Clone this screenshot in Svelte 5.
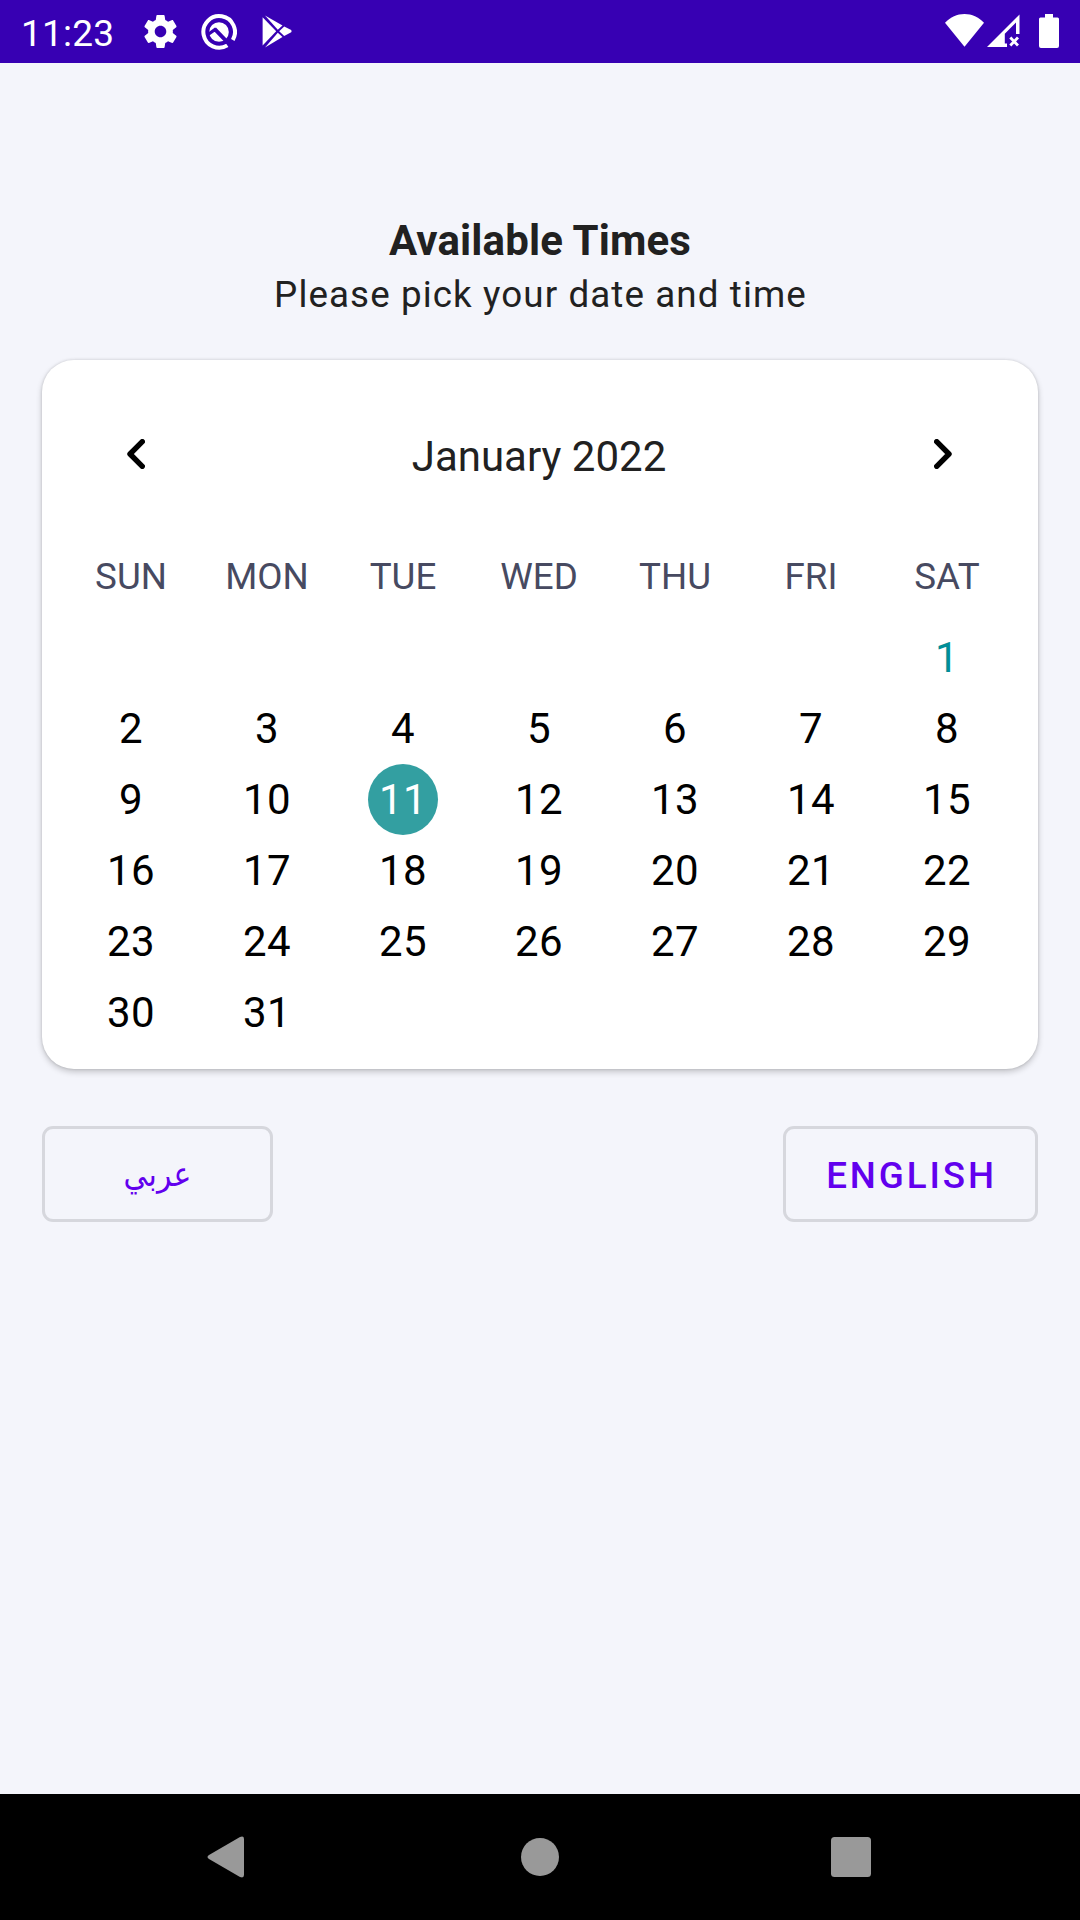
<script>
  const weekdays = ['SUN', 'MON', 'TUE', 'WED', 'THU', 'FRI', 'SAT'];
  const today = 1;
  const leadingBlanks = 6;
  const cells = [
    ...Array(leadingBlanks).fill(null),
    ...Array.from({ length: 31 }, (_, i) => i + 1)
  ];
  let selected = $state(11);
</script>

<div class="screen">
  <header class="status">
    <span class="clock">11:23</span>
    <svg class="gear" viewBox="2 2 20 20" fill="#fff">
      <path d="M19.43 12.98c.04-.32.07-.64.07-.98s-.03-.66-.07-.98l2.11-1.65c.19-.15.24-.42.12-.64l-2-3.46c-.12-.22-.39-.3-.61-.22l-2.49 1c-.52-.4-1.08-.73-1.69-.98l-.38-2.65C14.46 2.18 14.25 2 14 2h-4c-.25 0-.46.18-.49.42l-.38 2.65c-.61.25-1.17.59-1.69.98l-2.49-1c-.23-.09-.49 0-.61.22l-2 3.46c-.13.22-.07.49.12.64l2.11 1.65c-.04.32-.07.65-.07.98s.03.66.07.98l-2.11 1.65c-.19.15-.24.42-.12.64l2 3.46c.12.22.39.3.61.22l2.49-1c.52.4 1.08.73 1.69.98l.38 2.65c.03.24.24.42.49.42h4c.25 0 .46-.18.49-.42l.38-2.65c.61-.25 1.17-.59 1.69-.98l2.49 1c.23.09.49 0 .61-.22l2-3.46c.12-.22.07-.49-.12-.64l-2.11-1.65zM12 15.5c-1.93 0-3.5-1.57-3.5-3.5s1.57-3.5 3.5-3.5 3.5 1.57 3.5 3.5-1.57 3.5-3.5 3.5z" />
    </svg>
    <svg class="ring" viewBox="0 0 36 36" fill="none">
      <path d="M26.4 31.4A15.8 15.8 0 1 1 31.8 25.9" stroke="#fff" stroke-width="4" />
      <circle cx="18" cy="18" r="9.8" fill="#fff" />
      <path d="M7 20.5L13.8 15.6L29.500 32" stroke="#3700b3" stroke-width="3.2" />
      <path d="M14 14.5L27 28" stroke="#3700b3" stroke-width="2.6" />
    </svg>
    <svg class="play" viewBox="0 0 30 33" fill="#fff">
      <path d="M.6 2.2L14.2 16.2L.6 30.6Z" />
      <path d="M3 .4L20.5 10.4L15.8 14.7Z" />
      <path d="M3 32.4L20.5 22L15.8 17.8Z" />
      <path d="M22.2 11.4L29.2 15Q30 16.2 29.2 17.2L22.2 21.1L17.2 16.2Z" />
    </svg>
    <span class="spacer"></span>
    <svg class="wifi" viewBox="0 0 39 33" fill="#fff">
      <path d="M0 8.8C5.5 3 12 0 19.5 0S33.5 3 39 8.8L19.5 32.8Z" />
    </svg>
    <svg class="signal" viewBox="0 0 33 33">
      <path fill="#fff" fill-rule="evenodd" d="M0 33L32.5 .5V20H29V8.5L17.8 19.7V29.6H20V33Z" />
      <path d="M23.3 23.5L31 31.5M31 23.5L23.3 31.5" stroke="#fff" stroke-width="2.8" />
    </svg>
    <svg class="battery" viewBox="0 0 20 34" fill="#fff">
      <path d="M6 0h8v3.500h4.500q1.500 0 1.500 1.500v27q0 2-2 2h-16q-2 0-2-2v-27q0-1.500 1.500-1.500h4.500z" />
    </svg>
  </header>

  <main>
    <h1>Available Times</h1>
    <p class="subtitle">Please pick your date and time</p>

    <section class="card">
      <div class="month-bar">
        <button class="arrow" aria-label="Previous month">
          <svg viewBox="0 0 18 30"><path d="M15.300 2.700L3 15L15.300 27.300" /></svg>
        </button>
        <span class="month">January 2022</span>
        <button class="arrow" aria-label="Next month">
          <svg viewBox="0 0 18 30"><path d="M2.700 2.700L15 15L2.700 27.300" /></svg>
        </button>
      </div>
      <div class="week">
        {#each weekdays as name}
          <span>{name}</span>
        {/each}
      </div>
      <div class="days">
        {#each cells as day}
          {#if day}
            <button
              class="day"
              class:today={day === today}
              class:selected={day === selected}
              onclick={() => (selected = day)}
            >{day}</button>
          {:else}
            <span></span>
          {/if}
        {/each}
      </div>
    </section>

    <div class="languages">
      <button class="lang arabic" lang="ar" dir="rtl"><span>عربي</span></button>
      <button class="lang english">ENGLISH</button>
    </div>
  </main>

  <nav>
    <svg class="back" viewBox="0 0 37 42"><path d="M2 19L33 1Q37-.5 37 3V39Q37 42.500 33 41L2 23Q-1 21 2 19Z" /></svg>
    <svg class="home" viewBox="0 0 38 38"><circle cx="19" cy="19" r="19" /></svg>
    <svg class="recents" viewBox="0 0 40 40"><rect width="40" height="40" rx="3.500" /></svg>
  </nav>
</div>

<style>
  :global(body) {
    margin: 0;
  }
  .screen {
    display: flex;
    flex-direction: column;
    width: 1080px;
    height: 1920px;
    background: #f4f5fb;
    color: #212121;
    font-family: Roboto, sans-serif;
  }
  svg {
    display: block;
    flex: none;
  }
  button {
    margin: 0;
    padding: 0;
    border: 0;
    background: none;
    font-family: inherit;
  }
  .status {
    display: flex;
    align-items: center;
    box-sizing: border-box;
    height: 63px;
    padding: 0 21px 0 21px;
    background: #3700b3;
  }
  .clock {
    width: 123px;
    padding-top: 4px;
    color: #fff;
    font-size: 37px;
    line-height: 43px;
    letter-spacing: 0.2px;
  }
  .gear {
    width: 33px;
    height: 33px;
  }
  .ring {
    width: 36px;
    height: 36px;
    margin-left: 24px;
  }
  .play {
    width: 30px;
    height: 33px;
    margin-left: 25px;
  }
  .spacer {
    flex: 1;
  }
  .wifi {
    width: 39px;
    height: 33px;
    margin-right: 3px;
    margin-bottom: 3px;
  }
  .signal {
    width: 33px;
    height: 33px;
    margin-right: 19px;
    margin-bottom: 2px;
  }
  .battery {
    width: 20px;
    height: 34px;
    margin-bottom: 1px;
  }
  main {
    flex: 1;
    padding: 153px 42px 0;
  }
  h1 {
    margin: 0 0 5px;
    font-size: 42px;
    font-weight: 700;
    line-height: 49px;
    letter-spacing: 0.15px;
    text-align: center;
  }
  .subtitle {
    margin: 0 0 41px;
    padding-left: 1px;
    font-size: 36.750px;
    line-height: 49px;
    letter-spacing: 1.100px;
    text-align: center;
  }
  .card {
    box-sizing: border-box;
    height: 709px;
    padding: 44px 21px 0;
    border-radius: 32px;
    background: #fff;
    box-shadow: 0 3px 6px rgba(0, 0, 0, 0.2), 0 0 3px rgba(0, 0, 0, 0.14);
  }
  .month-bar {
    display: flex;
    align-items: center;
    justify-content: space-between;
    width: 952px;
    height: 100px;
    margin-bottom: 48px;
  }
  .arrow {
    display: flex;
    align-items: center;
    justify-content: center;
    width: 145px;
    height: 100px;
  }
  .arrow svg {
    width: 18px;
    height: 30px;
    fill: none;
    stroke: #000;
    stroke-width: 5.400;
    stroke-linecap: round;
    stroke-linejoin: round;
  }
  .month {
    padding-top: 4px;
    font-size: 42px;
    line-height: 49px;
  }
  .week,
  .days {
    display: grid;
    grid-template-columns: repeat(7, 136px);
  }
  .week {
    margin-bottom: 20px;
    color: #474a61;
    font-size: 36.750px;
    line-height: 50px;
    text-align: center;
  }
  .days {
    grid-auto-rows: 71px;
    justify-items: center;
  }
  .day {
    width: 70px;
    height: 71px;
    border-radius: 50%;
    color: #000;
    font-size: 42px;
    line-height: 71px;
    letter-spacing: 0.500px;
    text-align: center;
  }
  .today {
    color: #018e97;
  }
  .selected {
    background: #339fa1;
    color: #fff;
  }
  .languages {
    display: flex;
    justify-content: space-between;
    margin-top: 57px;
  }
  .lang {
    box-sizing: border-box;
    height: 96px;
    border: 3px solid #d6d7dd;
    border-radius: 11px;
    color: #6200ee;
    font-size: 36.750px;
    font-weight: 500;
    line-height: 90px;
  }
  .arabic {
    width: 231px;
    font-family: "DejaVu Sans", sans-serif;
    font-size: 34px;
    font-weight: 400;
  }
  .arabic span {
    display: inline-block;
    transform: scaleX(0.88);
  }
  .english {
    width: 255px;
    padding: 2px 0 0 2px;
    letter-spacing: 2.900px;
  }
  nav {
    display: flex;
    align-items: center;
    justify-content: space-between;
    box-sizing: border-box;
    height: 126px;
    padding: 0 209px 0 207px;
    background: #000;
    fill: #999;
  }
  .back {
    width: 37px;
    height: 42px;
    margin-right: 5px;
  }
  .home {
    width: 38px;
    height: 38px;
  }
  .recents {
    width: 40px;
    height: 40px;
  }
</style>
